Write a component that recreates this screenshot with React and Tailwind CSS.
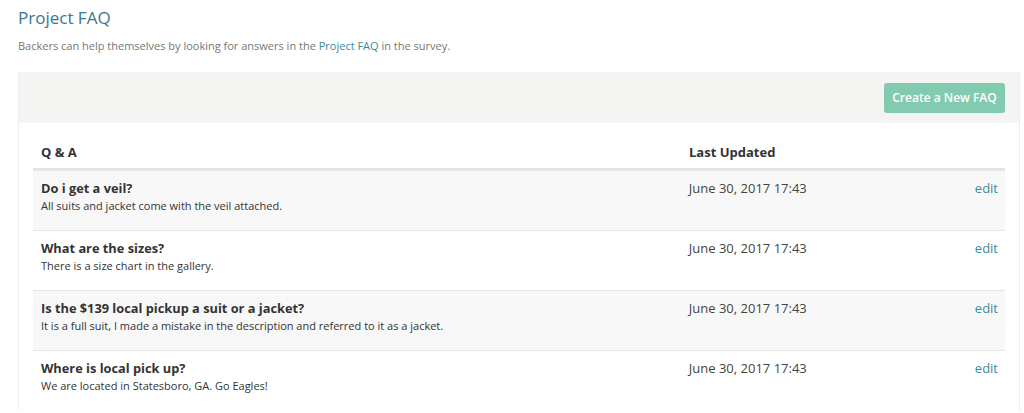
const faqs = [
  { q: 'Do i get a veil?', a: 'All suits and jacket come with the veil attached.' },
  { q: 'What are the sizes?', a: 'There is a size chart in the gallery.' },
  { q: 'Is the $139 local pickup a suit or a jacket?', a: 'It is a full suit, I made a mistake in the description and referred to it as a jacket.' },
  { q: 'Where is local pick up?', a: 'We are located in Statesboro, GA. Go Eagles!' },
]

export default function App() {
  return (
    <div className="bg-white h-[413px] overflow-hidden pl-[18px] pr-[4px] pt-[5px] font-['Open_Sans',sans-serif] text-[#333]">
      <h1 className="text-[17px] leading-[26px] text-[#3b7888]">Project FAQ</h1>
      <p className="mt-[7px] text-[11px] leading-[16px] text-[#777]">
        Backers can help themselves by looking for answers in the{' '}
        <a className="text-[#3b8a9a]">Project FAQ</a> in the survey.
      </p>

      <div className="mt-[18px] border-x border-[#eeeeec]">
        <div className="bg-[#f4f5f3] h-[51px] flex items-center justify-end pr-[14px]">
          <button className="h-[30px] w-[121px] rounded-[3px] bg-[#83cbb0] text-white text-[12px] font-semibold">
            Create a New FAQ
          </button>
        </div>

        <div className="px-[14px] pt-[20px]">
          <div className="flex h-[27px] border-b-2 border-[#e3e3e3] text-[13px] font-bold text-[#333] pl-[8px]">
            <div className="flex-1">Q &amp; A</div>
            <div className="w-[316px]">Last Updated</div>
          </div>
          {faqs.map((f, i) => (
            <div
              key={i}
              className={`flex h-[60px] border-t-[1.5px] first:border-t-0 border-[#e6e6e6] pl-[8px] pr-[7px] pt-[8px] ${i % 2 === 0 ? 'bg-[#f8f8f8]' : 'bg-white'}`}
            >
              <div className="flex-1">
                <div className="text-[12.8px] leading-[18px] font-bold text-[#333]">{f.q}</div>
                <div className="text-[11px] leading-[17px] text-[#333]">{f.a}</div>
              </div>
              <div className="w-[286px] text-[13px] leading-[18px] text-[#444]">June 30, 2017 17:43</div>
              <a className="text-[13px] leading-[18px] text-[#3b8a9a]">edit</a>
            </div>
          ))}
        </div>
      </div>
    </div>
  )
}
